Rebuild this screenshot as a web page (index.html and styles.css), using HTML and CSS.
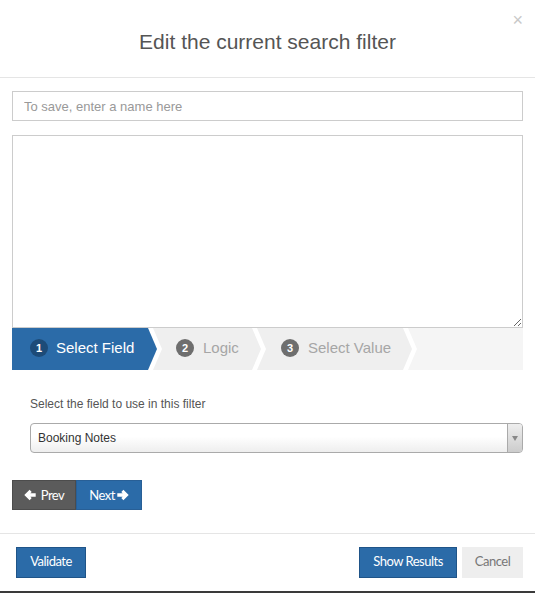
FILE: index.html
```html
<!DOCTYPE html>
<html>
<head>
<meta charset="utf-8">
<link rel="stylesheet" href="styles.css">
</head>
<body>
<div class="modal">
  <div class="modal-header">
    <h4 class="modal-title">Edit the current search filter</h4>
    <button class="close" type="button">×</button>
  </div>
  <div class="modal-body">
    <input class="name-input" type="text" placeholder="To save, enter a name here">
    <textarea class="filter-text"></textarea>
    <div class="steps">
      <div class="step step-first active"><span class="num">1</span><span class="label">Select Field</span></div>
      <div class="step step-2"><span class="num">2</span><span class="label">Logic</span></div>
      <div class="step step-3"><span class="num">3</span><span class="label">Select Value</span></div>
      <div class="step-fill"></div>
    </div>
    <div class="field-panel">
      <div class="field-label">Select the field to use in this filter</div>
      <div class="select">
        <span class="select-value">Booking Notes</span>
        <span class="select-arrow"><span class="caret"></span></span>
      </div>
    </div>
    <div class="pager">
      <button class="btn btn-prev" type="button"><svg class="ico" viewBox="0 0 12 12" width="12" height="12"><path d="M0.3 6 L5.6 0.8 L7.7 2.9 L6.3 4.3 L11.7 4.3 L11.7 7.7 L6.3 7.7 L7.7 9.1 L5.6 11.2 Z" fill="#fff"/></svg>Prev</button>
      <button class="btn btn-next" type="button">Next<svg class="ico" viewBox="0 0 12 12" width="12" height="12"><path d="M11.7 6 L6.4 0.8 L4.3 2.9 L5.7 4.3 L0.3 4.3 L0.3 7.7 L5.7 7.7 L4.3 9.1 L6.4 11.2 Z" fill="#fff"/></svg></button>
    </div>
  </div>
  <div class="modal-footer">
    <button class="btn btn-primary btn-validate" type="button">Validate</button>
    <div class="footer-right">
      <button class="btn btn-primary btn-show" type="button">Show Results</button>
      <button class="btn btn-cancel" type="button">Cancel</button>
    </div>
  </div>
</div>
</body>
</html>
```
FILE: styles.css
```css
* { box-sizing: border-box; }
html, body { margin: 0; padding: 0; background: #fff; }
body { font-family: "Liberation Sans", Arial, sans-serif; color: #333; }

.modal {
  width: 535px;
  height: 593px;
  background: #fff;
  border-bottom: 2px solid #3a3a3a;
  display: flex;
  flex-direction: column;
}

.modal-header {
  position: relative;
  height: 78px;
  border-bottom: 1px solid #e5e5e5;
  display: flex;
  justify-content: center;
  padding-top: 29px;
}
.modal-title {
  margin: 0;
  font-size: 21px;
  font-weight: normal;
  color: #555;
  line-height: 26px;
}
.close {
  position: absolute;
  top: 11px;
  right: 12px;
  border: 0;
  background: none;
  padding: 0;
  font-family: "Liberation Sans", Arial, sans-serif;
  font-size: 18px;
  line-height: 18px;
  color: #c8c8c8;
}

.modal-body {
  padding: 13px 12px 0 12px;
  flex: 1;
}
.name-input {
  display: block;
  width: 511px;
  height: 30px;
  border: 1px solid #ccc;
  padding: 0 11px;
  font-family: "Liberation Sans", Arial, sans-serif;
  font-size: 13px;
  color: #555;
  outline: none;
}
.name-input::placeholder { color: #999; }
.filter-text {
  display: block;
  width: 511px;
  height: 193px;
  margin-top: 14px;
  border: 1px solid #ccc;
  outline: none;
  resize: both;
}

.steps {
  display: flex;
  height: 42px;
  width: 511px;
  background: #fff;
}
.step {
  display: flex;
  align-items: center;
  height: 42px;
  padding-bottom: 3px;
  background: #efefef;
  color: #a6a6a6;
  font-size: 15px;
  margin-left: -4px;
  clip-path: polygon(0 0, calc(100% - 9px) 0, 100% 50%, calc(100% - 9px) 100%, 0 100%, 9px 50%);
}
.step-first {
  margin-left: 0;
  width: 145px;
  padding-left: 18px;
  clip-path: polygon(0 0, calc(100% - 9px) 0, 100% 50%, calc(100% - 9px) 100%, 0 100%);
}
.step.active { background: #2b6ba8; color: #fff; }
.step-2 { width: 108px; padding-left: 23px; }
.step-3 { width: 155px; padding-left: 24px; }
.step-fill {
  flex: 1;
  margin-left: -4px;
  height: 42px;
  background: #f5f5f5;
  clip-path: polygon(0 0, 100% 0, 100% 100%, 0 100%, 9px 50%);
}
.num {
  width: 18px;
  height: 18px;
  border-radius: 50%;
  background: #6e6e6e;
  color: #fff;
  font-size: 11px;
  font-weight: bold;
  display: flex;
  align-items: center;
  justify-content: center;
  margin-right: 8px;
  flex: none;
}
.step.active .num { background: #1d4b78; }
.step-2 .num, .step-3 .num { margin-right: 9px; }

.field-panel {
  padding: 27px 0 0 18px;
}
.field-label {
  font-size: 12px;
  color: #555;
  line-height: 14px;
}
.select {
  margin-top: 12px;
  height: 30px;
  border: 1px solid #aaa;
  border-radius: 4px;
  background: linear-gradient(to bottom, #fff 0%, #fff 45%, #eee 100%);
  display: flex;
  align-items: center;
  justify-content: space-between;
  overflow: hidden;
}
.select-value {
  padding-left: 7px;
  font-size: 12px;
  color: #333;
}
.select-arrow {
  width: 15px;
  height: 100%;
  border-left: 1px solid #aaa;
  background: linear-gradient(to bottom, #eee 0%, #ccc 100%);
  display: flex;
  align-items: center;
  justify-content: center;
}
.caret {
  width: 0;
  height: 0;
  border-left: 3px solid transparent;
  border-right: 3px solid transparent;
  border-top: 5px solid #888;
}

.pager {
  display: flex;
  margin-top: 27px;
}
.btn {
  border: 0;
  margin: 0;
  font-family: Lato, "Liberation Sans", sans-serif;
  font-size: 13px;
  letter-spacing: -0.5px;
  color: #fff;
  display: flex;
  align-items: center;
  justify-content: center;
  padding: 0;
}
.btn-prev {
  width: 64px;
  height: 30px;
  padding-bottom: 1px;
  background: #5b5b5b;
  border: 1px solid #4c4c4c;
}
.btn-prev .ico { margin-right: 5px; }
.btn-next {
  width: 66px;
  height: 30px;
  padding-bottom: 1px;
  background: #2b6ba8;
  border: 1px solid #285f96;
}
.btn-next .ico { margin-left: 2px; }

.modal-footer {
  height: 58px;
  border-top: 1px solid #e5e5e5;
  padding: 13px 12px 0 16px;
  display: flex;
  justify-content: space-between;
  align-items: flex-start;
}
.btn-primary {
  height: 31px;
  padding-bottom: 3px;
  background: #2b6ba8;
  border: 1px solid #1f5488;
}
.btn-validate { width: 70px; }
.footer-right { display: flex; }
.btn-show { width: 98px; }
.btn-cancel {
  width: 61px;
  height: 31px;
  padding-bottom: 3px;
  margin-left: 5px;
  background: #eee;
  color: #777;
}
```
